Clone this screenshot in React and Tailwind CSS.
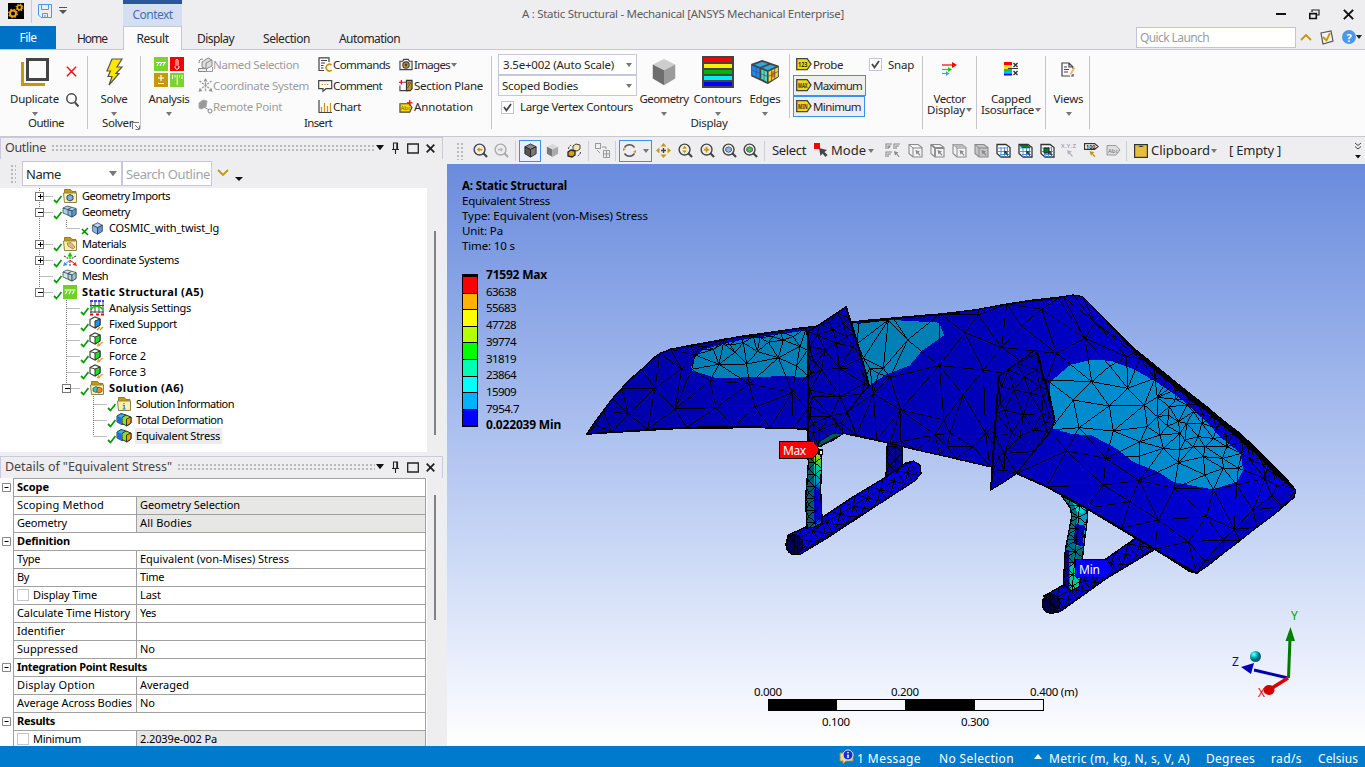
import React, { useLayoutEffect, useRef } from 'react';

/* Text label that spreads its letters so that it fills the width w. */
function T({ w, className = '', children }) {
  const ref = useRef(null);
  useLayoutEffect(() => {
    const el = ref.current;
    if (!w || !el) return;
    el.style.letterSpacing = '0px';
    const natural = el.getBoundingClientRect().width;
    el.style.letterSpacing = (w - natural) / el.textContent.length + 'px';
  }, [w, children]);
  return <span ref={ref} className={'inline-block whitespace-pre align-top ' + className}>{children}</span>;
}

const Svg = ({ w = 16, h = 16, vb, className = '', children }) => (
  <svg width={w} height={h} viewBox={vb || `0 0 ${w} ${h}`} className={'block shrink-0 ' + className} fill="none">{children}</svg>
);
const Caret = ({ className = '', c = '#777', s = 6 }) => (
  <Svg w={s} h={(s * 2) / 3} vb="0 0 6 4" className={className}><path d="M0 0h6L3 4z" fill={c} /></Svg>
);
const Dots = ({ className }) => <div className={'bg-[radial-gradient(circle,#9a9aa2_0.6px,transparent_0.9px)] bg-[length:4px_4px] ' + className} />;

/* ---------- icons ---------- */
const Cube = ({ s = 16, top = '#d8d8d8', l = '#777', r = '#aaa', st = '#444', className = '' }) => (
  <Svg w={s} h={s} vb="0 0 16 16" className={className}>
    <path d="M8 1l6 3-6 3-6-3z" fill={top} stroke={st} strokeWidth=".9" />
    <path d="M2 4l6 3v8l-6-3.5z" fill={l} stroke={st} strokeWidth=".9" />
    <path d="M14 4L8 7v8l6-3.5z" fill={r} stroke={st} strokeWidth=".9" />
  </Svg>
);
const Mag = ({ c = '#444', children }) => (
  <Svg w={15} h={15} vb="0 0 16 16"><circle cx="7" cy="7" r="5.800" stroke={c} strokeWidth="1.500" /><path d="M11 11l4 4" stroke={c} strokeWidth="2.200" />{children}</Svg>
);
const Gears = () => (
  <Svg w={16} h={16}>
    <rect width="16" height="16" fill="#000" />
    <circle cx="5" cy="10.5" r="3" stroke="#e8a317" strokeWidth="2" /><circle cx="5" cy="10.5" r="4.3" stroke="#e8a317" strokeWidth="1.2" strokeDasharray="1.5 1.9" />
    <circle cx="11.5" cy="4.5" r="2.2" stroke="#e8a317" strokeWidth="1.6" /><circle cx="11.5" cy="4.5" r="3.4" stroke="#e8a317" strokeWidth="1.1" strokeDasharray="1.3 1.4" />
  </Svg>
);
const Save = () => (
  <Svg w={14} h={14}><path d="M.5.5h13v13H3L.5 11z" stroke="#4a98ea" /><path d="M3.500.5v5h7v-5M4.500 13.500V9.500h5v4M7 11v2" stroke="#4a98ea" /></Svg>
);
const Duplicate = () => (
  <Svg w={28} h={28}><path d="M1.500 4v22.500H24" stroke="#c7960c" strokeWidth="3" /><rect x="6.500" y="1.500" width="20" height="20" stroke="#444" strokeWidth="3" fill="#fbfbfb" /></Svg>
);
const Bolt = () => (
  <Svg w={20} h={28}><path d="M8 1h10L13 9h5l-6 6.500h3L5 27l3-8.500H4l2.500-5.500H3z" fill="#fde600" stroke="#555" strokeWidth="1.2" /></Svg>
);
const AnalysisIcon = () => (
  <Svg w={30} h={30}>
    <rect width="14" height="14" fill="#79d42e" /><rect x="16" width="14" height="14" fill="#f00000" />
    <rect y="16" width="14" height="14" fill="#c79a0c" /><rect x="16" y="16" width="14" height="14" fill="#79d42e" />
    <path d="M2 5.500h10M4.500 6L3 9M7.500 6L6 9M10.500 6L9 9" stroke="#fff" /><path d="M22 3.500a1 1 0 012 0v5a2 2 0 11-2 0z" stroke="#fff" fill="none" />
    <path d="M7 18v6M4 21h6M4 26.500h6" stroke="#fff" strokeWidth="1.200" /><path d="M18.500 18v4M21 18v2.500M23.200 18v10M25.500 18v2.500M28 18v4" stroke="#fff" />
  </Svg>
);
const NamedSel = () => (
  <Svg w={15} h={15}><path d="M4 5l6-4 4 2v6l-6 3-4-2z" fill="#ddd" stroke="#888" /><path d="M8 6v6M8 6l6-3" stroke="#888" /><path d="M.5 11.500h8v3h-8zM1 6c0-3 1-4 4-4" fill="#eee" stroke="#888" /><path d="M7 14.500h7.500V10" stroke="#999" /></Svg>
);
const CoordGrey = () => (
  <Svg w={15} h={15}><path d="M7.500 1v13M1.500 3l12 9M13.500 3l-12 9" stroke="#999" strokeDasharray="2.200 1" strokeWidth="1.300" /><path d="M5.500 3.500L7.500 0l2 3.500zM.5 14l1-4 3 3zM14.500 14l-1-4-3 3z" fill="#999" /></Svg>
);
const Remote = () => (
  <Svg w={15} h={15}><path d="M1 4l4-3 4 1-1 6-5 2-2-1z" fill="#999" stroke="#aaa" /><path d="M6 8l5 3" stroke="#999" /><circle cx="12" cy="12" r="2" stroke="#888" /></Svg>
);
const Commands = () => (
  <Svg w={15} h={15}><path d="M6 13.500H1V.8h10V5M3 3.500h6M3 6h4M3 8.500h2.500M3 11h2.500" stroke="#444" strokeWidth="1.200" /><path d="M13.500 8a3.300 3.300 0 10.3 5" stroke="#c7960c" strokeWidth="1.700" /></Svg>
);
const Comment = () => (
  <Svg w={15} h={15}><path d="M.7 2.700h13v8H8l-3 2.500v-2.500H.7z" stroke="#444" strokeWidth="1.200" fill="#fff" /><path d="M3.500 6.500h8" stroke="#c7960c" strokeWidth="1.200" strokeDasharray="1.500 1.200" /></Svg>
);
const Chart = () => (
  <Svg w={15} h={15}><path d="M1 1v12.500h13" stroke="#444" strokeWidth="1.200" /><path d="M3.500 8v5M6.500 4v9M9.500 7v6M12.500 4v9" stroke="#c7960c" strokeWidth="1.200" /></Svg>
);
const Camera = () => (
  <Svg w={14} h={14} vb="0 0 15 15"><path d="M1 3.500h3l1-2h5l1 2h3v9H1z" fill="#eee" stroke="#444" strokeWidth="1.200" /><circle cx="7.500" cy="7.500" r="3.400" fill="#c79a20" stroke="#444" strokeWidth="1.200" /><circle cx="7.500" cy="7.500" r="1.500" fill="#444" /></Svg>
);
const Section = () => (
  <Svg w={14} h={14} vb="0 0 15 15"><path d="M5 3.500h4v9H1V7" stroke="#444" strokeWidth="1.200" /><path d="M8 1.500h6v9l-2 2H8z" fill="#c7960c" stroke="#333" strokeWidth="1.200" /><path d="M9 10l4-7M9.500 6L11 3" stroke="#555" /><path d="M0 3.500h5M2.500 1v5" stroke="#e00" strokeWidth="1.300" /></Svg>
);
const Annot = () => (
  <Svg w={14} h={14} vb="0 0 15 15"><path d="M1 4h10l3 4-2.500 5H1z" fill="#f5d90c" stroke="#444" strokeWidth="1.200" /><text x="1.500" y="11" fontSize="6.500" fill="#7a6400" className="font-['Noto_Sans',sans-serif]">Abc</text><path d="M8.500 3h6M11.500 0v6" stroke="#e00" strokeWidth="1.300" /></Svg>
);
const Tag = ({ t }) => (
  <Svg w={16} h={13}><path d="M.7.700h10.500l3.800 5.300-3.800 5.600H.7z" fill="#f5d90c" stroke="#444" strokeWidth="1.300" /><text x="2" y="8.800" fontSize="7" fontWeight="700" textLength="9.500" lengthAdjust="spacingAndGlyphs" fill="#333" className="font-['Noto_Sans',sans-serif]">{t}</text></Svg>
);
const Contours = () => (
  <Svg w={32} h={32}><rect width="32" height="32" fill="#444" /><path d="M2 4h28" stroke="#f00" strokeWidth="4" /><path d="M2 10h28" stroke="#f5f000" strokeWidth="4" /><path d="M2 16h28" stroke="#00b400" strokeWidth="4" /><path d="M2 22h28" stroke="#00f0f0" strokeWidth="4" /><path d="M2 28h28" stroke="#00f" strokeWidth="4" /></Svg>
);
const Edges = () => (
  <Svg w={28} h={24} vb="0 0 30 26"><path d="M1 5L12 1l17 6v11l-11 7L1 17z" fill="#2ea8e0" stroke="#444" strokeWidth="2" /><path d="M1 5l9 3.500V20l-9-4z" fill="#1e86f0" /><path d="M11 9l7 3v12l-7-4z" fill="#4fe0c0" /><path d="M18 12l11-5v11l-11 6z" fill="#e8e020" /><path d="M22 13l4-2v7l-4 2z" fill="#f26c1c" /><path d="M1 5l17 7 11-5M18 12v12M10 8.500V20M10 8.500L21 4" stroke="#444" strokeWidth="1.800" /><path d="M5.500 7v11M14 11v11M22 10v12M25.500 9v11M18 18l11-5.500M1 11l17 7" stroke="#456" strokeWidth=".8" /></Svg>
);
const VectorI = () => (
  <Svg w={15} h={14}><path d="M0 3h11" stroke="#f00" strokeWidth="1.200" /><path d="M10 0l5 3-5 3z" fill="#f00" /><path d="M0 7.500h7" stroke="#0d0" strokeWidth="1.200" /><path d="M6 5l4 2.500L6 10z" fill="#0d0" /><path d="M0 11.500h5" stroke="#4a98ea" strokeWidth="1.200" /><path d="M4 9l3.500 2.500L4 14z" fill="#4a98ea" /></Svg>
);
const Capped = () => (
  <Svg w={15} h={14}><path d="M0 1.500h8" stroke="#f00" strokeWidth="3" /><path d="M0 5h8" stroke="#fd0" strokeWidth="4" /><path d="M0 8.500h8" stroke="#0c4" strokeWidth="3" /><path d="M0 10.500h8" stroke="#0bf" strokeWidth="2" /><path d="M0 12.500h8" stroke="#00f" strokeWidth="2" /><path d="M4 6.500h10" stroke="#333" /><path d="M9.500 1l4 4M13.500 1l-4 4M9.500 9l4 4M13.500 9l-4 4" stroke="#333" strokeWidth="1.400" /></Svg>
);
const Views = () => (
  <Svg w={15} h={15}><path d="M9 14H1V1h7l4 4v2M12 12v2h-2M8 1v4h4M3 5h3M3 7.500h5M3 10h4" stroke="#444" strokeWidth="1.200" /><path d="M13.500 5.500l-4 7" stroke="#e2c27a" strokeWidth="2" /></Svg>
);

/* toolbar icons */
const Pan = () => (
  <Svg w={15} h={15}><path d="M7.500 0l3 3.500h-6zM7.500 15l3-3.500h-6zM0 7.500l3.500-3v6zM15 7.500l-3.500-3v6z" fill="#c7960c" /><path d="M7.500 5v5M5 7.500h5" stroke="#444" strokeWidth="1.400" /></Svg>
);
const Rotate = () => (
  <Svg w={15} h={15}><path d="M2.500 4.500a6 6 0 0110 0M12.500 10.500a6 6 0 01-10 0" stroke="#555" strokeWidth="1.400" /><path d="M1 8V5l3 1zM14 7v3l-3-1z" fill="#c7960c" /></Svg>
);
const ViewCubes = () => (
  <Svg w={15} h={15}><path d="M6 3l3-2 4 1v4l-3 2-4-1z" fill="#f5e6b0" stroke="#444" /><path d="M1 9l3-2 4 1v4l-3 2-4-1z" fill="#d3a21c" stroke="#222" strokeWidth="1.300" /><path d="M1.500 6c0-2 1-3 3-4M13.500 9c0 2-1 3-3 4" stroke="#444" strokeDasharray="2 1" /></Svg>
);
const Boxes = () => (
  <Svg w={15} h={15}><rect x=".5" y=".5" width="5" height="5" stroke="#999" /><path d="M7 4h4v2M8.500 7.500h6v7h-6zM8.500 11h6M11.500 7.500v7M2 7l3 3" stroke="#999" /></Svg>
);
const Pointer = () => (
  <Svg w={15} h={15}><rect width="6" height="6" fill="#f00" /><path d="M5 5l8 2-2.500 2 3 3-2 2-3-3.500L6.500 13z" fill="#444" /></Svg>
);
const Pick = ({ v }) => (
  <Svg w={15} h={15}>
    <path d="M1 1.500h9l4 3v9.500H5L1 10.500z" fill={v === 3 ? '#c4c4c8' : '#f3f3f6'} stroke="#8a8a8e" strokeWidth="1.100" />
    <path d="M1 1.500l4 3.500h9M5 5v9" stroke="#8a8a8e" strokeWidth={v === 1 ? 1.8 : 1} />
    {v === 2 && <path d="M1 1.500h9l4 3H5z" fill="#bbb" />}
    <path d="M7.500 7l4.500 1.500-1.500 1 2 2.500-1 .8-1.800-2.500-1.200 1.500z" fill="#888" />
  </Svg>
);
const MeshPick = ({ v }) => (
  <Svg w={15} h={15}>
    <path d="M1 1.500h9l4 3v9.500H5L1 10.500z" fill="#fff" stroke="#333" strokeWidth="1.300" />
    <path d="M1 5h10M2 8.500h12M4 11.500h10M5 4v10M8.500 4v10M11.500 4v10" stroke="#4a98ea" />
    {v === 1 && <path d="M2 2.500h8l2 2H4z" fill="#0a8a1a" stroke="#063" />}
    {v === 2 && <path d="M4 5h5v5H4z" fill="#0a7a2a" stroke="#222" />}
    <path d="M8 7.500l4 1.300-1.500 1 1.800 2.200-.8.800-1.800-2.300-1 1.300z" fill="#333" />
  </Svg>
);
const Grid4 = () => (
  <Svg w={16} h={15}><path d="M1 6V1h6M3 6V3h2l-1 2M9 6V1h6M11 6V3h3M1 14V9h6M3 14v-3h3" stroke="#888" strokeWidth="1.100" /><path d="M9 8l4.500 1.500-1.500 1 2.500 3-1 .8-2-3L10 12.500z" fill="#888" /></Svg>
);
const XYZ = () => (
  <Svg w={16} h={15}><text x="0" y="5" fontSize="6" fill="#8d8d90" textLength="15" className="font-['Noto_Sans',sans-serif]">X.Y.Z</text><path d="M6 7l5 1.500-2 1.200 3 3.300-1 1-3-3.500L7 12z" fill="#b5b5b8" /></Svg>
);
const Tag100 = () => (
  <Svg w={15} h={15}><path d="M.6.600h10l3.500 2.900-3.500 2.900H.6z" fill="#fff" stroke="#333" strokeWidth="1.200" /><text x="2" y="5.500" fontSize="5.500" fontWeight="700" fill="#222" className="font-['Noto_Sans',sans-serif]">100</text><path d="M5.500 8l5 1.200-1.700 1 2.700 3-1 1-2.500-3L7 13z" fill="#c7960c" /></Svg>
);
const AbcTag = () => (
  <Svg w={15} h={15}><path d="M1 2.500h9l4 4.500-4 5H1z" fill="#ddd" stroke="#999" /><text x="2" y="9.500" fontSize="6" fill="#777" className="font-['Noto_Sans',sans-serif]">Abc</text></Svg>
);
const Pin = () => <Svg w={9} h={12}><path d="M1 7.500h7M2.500 7.500V1h4v6.500M5.800 1v6M4.500 8v4" stroke="#222" strokeWidth="1.100" /></Svg>;
const Square = () => <Svg w={12} h={11}><path d="M.7 1h10.600v9H.7z" stroke="#222" strokeWidth="1.300" /></Svg>;
const Cross = ({ s = 9, c = '#222', k = 1.8 }) => <Svg w={s} h={s} vb="0 0 9 9"><path d="M.7.700l7.600 7.600M8.300.7L.7 8.300" stroke={c} strokeWidth={k} /></Svg>;

/* tree icons */
const Folder = ({ children }) => (
  <Svg><path d="M2.500 1.500h6l1.500 2h4v2h-11.500z" fill="#c7960c" stroke="#8a6a10" strokeWidth=".8" /><path d="M1.500 5h13v9.500h-12z" fill="#fdf3a8" stroke="#8d8450" />{children}</Svg>
);
const TwoCubes = ({ a, b, c }) => (
  <Svg><path d="M1 4l4-2 9 2.500v6l-4 2.500-9-4z" fill={a} stroke="#465" strokeWidth=".9" /><path d="M6 5.500l4 1.500v6l-4-2z" fill={b} stroke="#354" strokeWidth=".8" /><path d="M10 7l4-2.500v6L10 13z" fill={c} stroke="#354" strokeWidth=".8" /><path d="M1 4l9 3M5.500 5.500l4-2" stroke="#345" strokeWidth=".8" /></Svg>
);
const TI = {
  geoimp: () => <Folder><path d="M5 8l3-1.500L11 8v3.500L8 13l-3-1.500z" fill="#7bb0e8" stroke="#345" /></Folder>,
  geo: () => <TwoCubes a="#a9cdf5" b="#86b7f0" c="#5c97dc" />,
  body: () => <Cube s={13} top="#b9d7fa" l="#86b7f0" r="#5c97dc" st="#333" />,
  mat: () => <Folder><path d="M5 7l4-.5 4 4.500-2 2-5-3z" fill="#e3b68a" stroke="#9a7040" strokeWidth=".7" /></Folder>,
  cs: () => <Svg><path d="M8 2v5" stroke="#0c0" strokeWidth="1.300" /><path d="M5.500 4.500L8 0l2.500 4.500z" fill="#0c0" /><path d="M8 8l-5 4" stroke="#48f" /><path d="M1 14l1.500-4 3 3z" fill="#48f" /><path d="M8 8l5 4" stroke="#e00" /><path d="M15 14l-1.500-4-3 3z" fill="#e22" /><path d="M2 4l5 3M14 4L9 7M8 9v5" stroke="#555" strokeWidth="1.200" strokeDasharray="2 1" /></Svg>,
  mesh: () => <TwoCubes a="#d8e4f0" b="#b7cbe2" c="#a9bdd6" />,
  ss: () => <Svg><rect x="1" y="1" width="14" height="14" fill="#6fd028" /><path d="M2.500 6h11M5 7l-1.500 3M8.500 7L7 10M12 7l-1.500 3" stroke="#fff" strokeWidth="1.100" /></Svg>,
  set: () => <Svg><path d="M1 1h14" stroke="#00f" strokeDasharray="3 1" strokeWidth="1.500" /><path d="M2 2v11M6 2v11M10 2v11M14 2v11M1 5.500h14M1 12h14" stroke="#444" /><path d="M2 10c2-5 9-5 12 0" stroke="#0c0" strokeWidth="1.500" /><path d="M1 14.500h3M7 14.500h3M12 14.500h3" stroke="#f00" strokeWidth="1.800" /></Svg>,
  fix: () => <Svg><path d="M1 3.500L6 1l5 2v6l-5 3-5-2.500z" fill="#fff" stroke="#444" strokeWidth="1.200" /><path d="M6 5l5-2v6l-5 3z" fill="#1e90f0" stroke="#333" /><path d="M8 14l3-3M11 14l3-3" stroke="#c7960c" strokeWidth="1.300" /></Svg>,
  force: () => <Svg><path d="M1 3.500L6 1l5 2v6l-5 3-5-2.500z" fill="#fff" stroke="#444" strokeWidth="1.200" /><path d="M6 5l5-2v6l-5 3z" fill="#1fdc2f" stroke="#333" /><path d="M1 3.500L6 5" stroke="#444" /><path d="M14 10l-4 3" stroke="#d8a33c" strokeWidth="1.400" /><path d="M7.500 14.500l2-4 2 3.500z" fill="#d8a33c" /></Svg>,
  sol: () => <Folder><path d="M4 8l3-1.500 2 1v4l-2 1-3-1.500z" fill="#2cc" stroke="#345" strokeWidth=".7" /><path d="M8 8.500l2-1.500 3 1.500v3L10 13l-2-1z" fill="#f80" stroke="#345" strokeWidth=".7" /></Folder>,
  info: () => <Folder><path d="M8 7v1.200M6.800 9.500h1.400V13M6.500 13h3.200" stroke="#1e80e0" strokeWidth="1.200" /></Folder>,
  res: () => <Svg><path d="M1 4l4-2.500L10 3v8l-4 1.500L1 10z" fill="#19c3f0" stroke="#333" /><path d="M1 4l4 1.500v7L1 10z" fill="#1b6fe8" /><path d="M6 5.500L10 3l5 2v6l-4 3-5-2.500z" fill="#8ee01c" stroke="#333" /><path d="M10.500 7L15 5v6l-4.500 3z" fill="#fb9a08" stroke="#333" /></Svg>,
};

/* ---------- outline tree ---------- */
const tree = [
  [0, '+', 'geoimp', 'Geometry Imports', 88],
  [0, '-', 'geo', 'Geometry', 48],
  [1, 'e', 'body', 'COSMIC_with_twist_lg', 110, 'x'],
  [0, '+', 'mat', 'Materials', 44],
  [0, '+', 'cs', 'Coordinate Systems', 97],
  [0, '', 'mesh', 'Mesh', 26],
  [0, '-', 'ss', 'Static Structural (A5)', 122],
  [1, '', 'set', 'Analysis Settings', 82],
  [1, '', 'fix', 'Fixed Support', 68],
  [1, '', 'force', 'Force', 28],
  [1, '', 'force', 'Force 2', 37],
  [1, '', 'force', 'Force 3', 37],
  [1, '-', 'sol', 'Solution (A6)', 75],
  [2, '', 'info', 'Solution Information', 98],
  [2, '', 'res', 'Total Deformation', 87],
  [2, '', 'res', 'Equivalent Stress', 84],
];
function TreeRow({ row, i }) {
  const [lv, ex, ic, label, w, mark] = row;
  const Icon = TI[ic];
  const cx = 13.5 + 27 * lv;
  const W = 36 + 27 * lv;
  const bold = label.includes('(');
  const last = ex === 'e' || label === 'Solution (A6)' || label === 'Static Structural (A5)' || i === tree.length - 1;
  const dot = { stroke: '#777', strokeDasharray: '1 1' };
  return (
    <div className="flex h-4 items-center pl-[26px]">
      <Svg w={W} h={16}>
        <path d={`M${cx} 0V${last ? 8 : 16}M${cx} 8.5h14`} {...dot} />
        {lv === 1 && ex === 'e' && <path d="M13.500 0v16" {...dot} />}
        {(ex === '+' || ex === '-') && (
          <g shapeRendering="crispEdges">
            <rect x={cx - 4} y="4.500" width="8" height="8" fill="#fff" stroke="#777" />
            <path d={`M${cx - 2} 8.500h5` + (ex === '+' ? `M${cx + 0.5} 6v5` : '')} stroke="#000" />
          </g>
        )}
        {mark ? <path d={`M${W - 7} 9l6 6M${W - 1} 8l-6 6`} stroke="#080" strokeWidth="1.500" /> :
          <path d={`M${W - 8} 12l2.500 2.500L${W - 0.5} 8`} stroke="#089a08" strokeWidth="1.800" />}
      </Svg>
      <span className="flex w-4 shrink-0 items-center justify-center"><Icon /></span>
      <span className={'ml-[3px] h-4 pl-px pr-0.5 ' + (i === 15 ? 'bg-[#ececee]' : '')}>
        <T w={w} className={'text-[11px] leading-4 text-black ' + (bold ? 'font-bold' : '')}>{label}</T>
      </span>
    </div>
  );
}

/* ---------- details ---------- */
const details = [
  ['h', 'Scope', 32],
  ['g', 'Scoping Method', 87, 'Geometry Selection', 100],
  ['g', 'Geometry', 50, 'All Bodies', 52],
  ['h', 'Definition', 53],
  ['', 'Type', 23, 'Equivalent (von-Mises) Stress', 149],
  ['', 'By', 12, 'Time', 24],
  ['c', 'Display Time', 64, 'Last', 21],
  ['', 'Calculate Time History', 113, 'Yes', 16],
  ['', 'Identifier', 48, '', 0],
  ['', 'Suppressed', 61, 'No', 15],
  ['h', 'Integration Point Results', 130],
  ['', 'Display Option', 78, 'Averaged', 49],
  ['', 'Average Across Bodies', 115, 'No', 15],
  ['h', 'Results', 38],
  ['cg', 'Minimum', 48, '2.2039e-002 Pa', 77],
];
function DetailRow({ d }) {
  const [k, name, nw, val, vw] = d;
  const t = 'text-[11px] leading-[15px] text-black';
  if (k === 'h')
    return (
      <div className="flex h-[18px]">
        <div className="flex w-[13px] items-center pl-[2px]"><Svg w={9} h={9}><path d="M.5.500h8v8h-8z" stroke="#888" /><path d="M2.500 4.500h4" stroke="#000" /></Svg></div>
        <div className="w-[413px] border border-b-0 border-[#a0a0a0] pl-[3px]"><T w={nw} className={t + ' font-bold'}>{name}</T></div>
      </div>
    );
  return (
    <div className="flex h-[18px] pl-[13px]">
      <div className="flex w-[123px] items-start border-l border-t border-[#a0a0a0] pl-[3px]">
        {k.includes('c') && <span className="mr-1 mt-[2px] h-3 w-3 border border-[#c4c4cc] bg-white" />}
        <T w={nw} className={t}>{name}</T>
      </div>
      <div className={'w-[290px] border-x border-t border-[#a0a0a0] pl-[3px] ' + (k.includes('g') ? 'bg-[#e7e7e5]' : '')}>
        {val && <T w={vw} className={t}>{val}</T>}
      </div>
    </div>
  );
}

/* ---------- mesh ---------- */
/* Bowyer-Watson triangulation; returns the edges as one path. */
function meshPath(pts) {
  const P = pts.map(([x, y], i) => [x + Math.sin(i * 7.3) * 0.01, y + Math.cos(i * 3.1) * 0.01]);
  const n = P.length;
  P.push([-9000, -9000], [12000, -9000], [1000, 15000]);
  const circ = (a, b, c) => {
    const [ax, ay] = P[a], [bx, by] = P[b], [cx, cy] = P[c];
    const d = 2 * (ax * (by - cy) + bx * (cy - ay) + cx * (ay - by));
    const A = ax * ax + ay * ay, B = bx * bx + by * by, C = cx * cx + cy * cy;
    const x = (A * (by - cy) + B * (cy - ay) + C * (ay - by)) / d;
    const y = (A * (cx - bx) + B * (ax - cx) + C * (bx - ax)) / d;
    return { t: [a, b, c], x, y, r: (ax - x) ** 2 + (ay - y) ** 2 };
  };
  let tris = [circ(n, n + 1, n + 2)];
  for (let i = 0; i < n; i++) {
    const edges = new Map();
    tris = tris.filter((q) => {
      if ((P[i][0] - q.x) ** 2 + (P[i][1] - q.y) ** 2 >= q.r) return true;
      for (let k = 0; k < 3; k++) {
        const a = q.t[k], b = q.t[(k + 1) % 3];
        const key = Math.min(a, b) + '_' + Math.max(a, b);
        edges.has(key) ? edges.set(key, null) : edges.set(key, [a, b]);
      }
      return false;
    });
    edges.forEach((e) => e && tris.push(circ(e[0], e[1], i)));
  }
  const seen = new Set();
  let out = '';
  tris.forEach(({ t }) => {
    for (let k = 0; k < 3; k++) {
      const a = Math.min(t[k], t[(k + 1) % 3]), b = Math.max(t[k], t[(k + 1) % 3]);
      if (b >= n || seen.has(a + '_' + b)) continue;
      seen.add(a + '_' + b);
      out += `M${pts[a][0]} ${pts[a][1]}L${pts[b][0]} ${pts[b][1]}`;
    }
  });
  return out;
}
const parse = (s, dx = 0) => s.trim().split(/\s+/).map((p) => { const [x, y] = p.split(',').map(Number); return [x + dx, y]; });
const poly = (pts) => 'M' + pts.map((p) => p.join(' ')).join('L') + 'Z';
const O = 1080;

const wing = [
  ...parse('20,432 45,395 70,362 98,325 125,295 150,268 185,238 215,208 240,190 272,178 330,166 380,158 430,148 480,140 540,132 600,124 640,118 680,112 815,96 870,90 940,84 1040,75'),
  ...parse('0,72 60,65 115,58 200,42 280,30 370,20 400,15 428,20 465,57 520,112 590,182 640,222 720,287 760,319 800,350 850,392 900,430 940,468 990,518 1040,568 1067,600 1062,622 1030,650 1000,675 950,712 900,752 850,790 810,822 770,850 750,845 700,813 645,778 600,750 545,715 490,683 440,655 380,622 320,590 270,568 230,550 150,530 80,514 0,495', O),
  ...parse('1010,480 930,460 790,430 720,470 683,420 640,414 570,412 520,411 460,410 320,412 280,414 203,418 95,427'),
];
/* mesh nodes that lie on the outline of the wing */
const wingRim = [
  ...parse('20,432 45,395 70,362 98,325 125,295 185,238 240,190 272,178 330,166 430,148 480,140 540,132 600,124 680,112 815,96 940,84 95,427 203,418 320,412 460,410 570,412 640,414 720,470 790,430 930,460 1010,480'),
  ...parse('0,72 115,58 200,42 370,20 400,15 428,20 590,185 640,225 720,290 800,352 850,395 900,432 940,470 990,518 1040,568 1067,600 1030,650 950,712 900,752 850,790 770,850 645,778 545,715 440,655 320,590 230,550 150,530 0,495', O),
];
const wingPts = [
  ...wingRim,
  ...parse('145,372 225,295 285,357 305,237 390,272 408,353 345,195 335,238 400,178 417,223 465,187 500,222 508,282 525,352 595,203 532,185 490,158 565,157 637,308 650,228 660,170 610,150 540,142 450,165 355,180 640,140 48,405 683,180 683,255 683,355 925,90 835,100 833,160 850,205 983,150 870,235 910,235 895,250 930,262 880,312 1078,227 962,360 1065,435 960,455 890,450 800,368 830,435 430,160 380,170 580,140 520,140'),
  ...parse('115,75 75,128 245,108 185,172 130,240 305,58 355,25 465,98 435,145 350,190 510,228 560,200 70,315 12,390 30,430 137,430 48,505 22,470 100,470 580,190 645,265 455,275 563,295 400,330 508,348 613,345 652,322 705,300 708,328 652,380 688,350 742,345 760,365 715,395 685,375 622,410 660,435 683,408 720,430 740,400 785,400 790,375 830,415 600,455 520,423 417,413 670,475 720,480 735,450 775,440 760,470 795,470 790,500 715,518 600,498 498,505 380,483 490,585 598,572 570,635 655,690 703,595 795,555 850,535 848,505 820,598 800,680 745,755 940,660 883,718 850,750 995,618 890,585 895,535 905,490 860,470 820,445 940,485 930,510 970,525 1000,550 1030,585 975,565 1010,590 795,815 600,205 650,245 680,270 725,305 750,330 800,362 840,395 880,430 910,455 960,505 1005,540 320,270 330,420 980,540 925,475 860,440 700,285 775,345 820,380', O),
];
const fin1 = parse('683,125 720,103 745,86 772,68 798,50 808,85 822,130 845,205 868,290 845,312 802,368 830,435 790,430 760,450 715,470 690,455 683,420 683,355 683,270 683,200');
const fin1Pts = [...fin1, ...parse('712,135 708,222 698,320 778,235 753,378 780,320 735,180 770,160 800,140 748,100 820,170 720,420 700,400 770,400 690,170 692,250 690,300 692,350 690,380 700,430 845,240 855,280 760,120 790,100 784,400 695,200 725,240')];
const fin2 = parse('175,260 230,220 285,180 295,190 310,260 325,300 345,392 328,430 282,485 230,550 190,577 152,600 157,545 160,490 168,370', O);
const fin2Pts = [...fin2, ...parse('195,360 193,490 250,375 253,260 215,430 305,370 320,425 290,240 270,310 185,290 240,440 165,440 178,500 180,340 315,400 300,290 310,320 222,300 205,240 192,540 330,380 280,420', O)];

function tube(x1, y1, r1, x2, y2, r2, n) {
  const dx = x2 - x1, dy = y2 - y1, l = Math.hypot(dx, dy), a = -dy / l, b = dx / l;
  const pts = [];
  for (let i = 0; i <= n; i++) {
    const t = i / n, r = r1 + (r2 - r1) * t;
    [-1, -0.15, 0.65, 1].forEach((k, j) => {
      const s = Math.min(1, Math.max(0, t + (j % 2) / (2 * n)));
      pts.push([+(x1 + dx * s + a * r * k).toFixed(1), +(y1 + dy * s + b * r * k).toFixed(1)]);
    });
  }
  return pts;
}
const skid1 = parse('625,735 680,710 730,680 820,620 920,560 975,520 1000,513 1020,525 1023,550 1005,572 900,640 740,745 660,793 630,785 618,760');
const skid2 = parse('312,918 370,885 500,805 590,742 645,778 500,865 360,965 335,970', O);
const strut1 = parse('683,470 720,478 725,510 722,600 727,700 700,712 680,712 677,620 685,520');
const strut2 = parse('365,618 440,655 443,680 430,780 418,890 395,902 370,882 376,780 395,680 392,655', O);
const strutR = parse('922,455 968,468 968,562 918,562');
/* leading edge of the right half, where the elements are too small to tell apart */
const edgeBand = parse('425,18 590,181 720,286 800,348 940,466 1040,564 1067,600 1052,594 1030,574 935,482 800,366 712,300 590,194', O);

function Part({ id, shape, pts, fill, sw = 3, children }) {
  const d = poly(shape);
  return (
    <g>
      <clipPath id={id}><path d={d} /></clipPath>
      <path d={d} fill={fill} />
      <g clipPath={`url(#${id})`}>{children}<path d={meshPath(pts)} stroke="#000" strokeWidth={sw} /></g>
      <path d={d} stroke="#000" strokeWidth="4" />
    </g>
  );
}
function Model() {
  return (
    <svg width="918" height="582" viewBox="447 164 918 582" className="block" fill="none" shapeRendering="crispEdges">
      <defs>
        <linearGradient id="blue" x1="0" x2="1"><stop offset="0" stopColor="#0000a6" /><stop offset=".2" stopColor="#0000b6" /><stop offset=".55" stopColor="#0000b8" /><stop offset=".8" stopColor="#0000c8" /><stop offset="1" stopColor="#0000de" /></linearGradient>
        <linearGradient id="hot" x1="0" y1="0" x2="0" y2="1"><stop offset="0" stopColor="#d8e800" /><stop offset=".12" stopColor="#7fd000" /><stop offset=".25" stopColor="#00c89a" /><stop offset=".45" stopColor="#0088c0" /><stop offset=".55" stopColor="#0000c8" /><stop offset=".9" stopColor="#0000c8" /><stop offset="1" stopColor="#007ac0" /></linearGradient>
        <radialGradient id="ball" cx=".35" cy=".3"><stop offset="0" stopColor="#8ff" /><stop offset=".5" stopColor="#0cc" /><stop offset="1" stopColor="#067" /></radialGradient>
      </defs>
      <g transform="translate(580 290) scale(.33333)">
        <Part id="sr" shape={strutR} pts={tube(945, 450, 24, 942, 565, 24, 3)} fill="#000092" />
        <Part id="k2" shape={skid2} pts={tube(333 + O, 940, 31, 620 + O, 758, 26, 7)} fill="#0000d0" />
        <ellipse cx={333 + O} cy="941" rx="26" ry="29" fill="#00004c" stroke="#000" strokeWidth="4" />
        <path d={`M${333 + O} 913v56M${312 + O} 925l42 32M${322 + O} 915l24 52`} stroke="#000" strokeWidth="2.500" />
        <Part id="s2" shape={strut2} pts={tube(415 + O, 630, 32, 392 + O, 905, 26, 8)} fill="#00707c">
          <path d={`M${410 + O} 640l35 20-14 90-22 20z`} fill="#00a0c0" /><path d={`M${405 + O} 700l30 10-8 60-25-10z`} fill="#0000b8" /><path d={`M${392 + O} 820l30 5-5 70-28 5z`} fill="#00c890" /><path d={`M${372 + O} 780l16 0-2 110-16-5z`} fill="#000090" /><path d={`M${400 + O} 640l35 15-5 15-20-5z`} fill="#00d8c8" />
        </Part>
        <Part id="k1" shape={skid1} pts={tube(640, 762, 32, 1005, 541, 28, 9)} fill="#0000da" />
        <ellipse cx="643" cy="764" rx="25" ry="30" fill="#00005a" stroke="#000" strokeWidth="4" />
        <path d="M643 735v58M622 748l42 32M632 737l24 52" stroke="#000" strokeWidth="2.500" />
        <Part id="s1" shape={strut1} pts={tube(702, 465, 24, 702, 715, 24, 7)} fill="#005a6e"><path d="M703 478h25v230h-25z" fill="url(#hot)" /></Part>
        <Part id="wg" shape={wing} pts={wingPts} fill="url(#blue)">
          <path d="M330 240l14-35 26-26 60-18 70-14 180-26v140l-70-3-100 4-105 2-45-15z" fill="#0080b4" />
          <path d="M820 100l115-10 143 8 14 38-68 48-34 42-72 28-50 32-50-60z" fill="#0080b4" />
          <path d={`M${330 + O} 276l62-52 60-14 60 2 70 26 70 40 70 48 80 72 40 44 60 48 8 50-20 36-72 22-118-22-45-30-75-30-50-40-75-40-60-4-60-18z`} fill="#008ccc" />
          <path d={`M${995 + O} 618l70-25 10 30-300 240-20-30z`} fill="#0000a8" fillOpacity=".55" />
        </Part>
        <path d={poly(edgeBand)} fill="#000" />
        <path d="M20 432l75-5 185-11 240-4 163 5M272 178l108-20 100-18 200-28M815 96l325-28" stroke="#000" strokeWidth="5" />
        <path d={`M${230 + O} 550l90 40 120 65 205 123 125 72`} stroke="#000" strokeWidth="6" />
        <Part id="f1" shape={fin1} pts={fin1Pts} fill="#0000b4" />
        <path d="M715 470l45-25 30-13-30-3-40 25z" fill="#005a50" stroke="#000" strokeWidth="2" />
        <path d="M684 125v330M798 50l24 80 23 75 23 85" stroke="#000" strokeWidth="6" />
        <Part id="f2" shape={fin2} pts={fin2Pts} fill="#0000b0" />
        <path d={`M${290 + O} 182l18 75 18 50 18 85M${177 + O} 258l-9 112-8 120-7 110`} stroke="#000" strokeWidth="6" />
        <path d="M598 455h102l20 25-20 25H598z" fill="#f00" stroke="#000" strokeWidth="3" />
        <rect x="717" y="480" width="11" height="14" fill="#fff" stroke="#000" strokeWidth="4" />
        <path d={`M${407 + O} 808h93l18 27-18 27h-93z`} fill="#0000f8" stroke="#000" strokeWidth="3" />
      </g>
      <g fill="#fff" className="font-['Noto_Sans',sans-serif] text-[12px]">
        <text x="783" y="455" textLength="23">Max</text><text x="1079" y="574" textLength="21">Min</text>
      </g>
      <g stroke="#000">
        <rect x="768.500" y="699.500" width="275" height="11" fill="#f7f8fd" />
        <path d="M768 699h69v12h-69zM905 699h70v12h-70z" fill="#000" stroke="none" />
      </g>
      <g fill="#000" className="font-['Noto_Sans',sans-serif] text-[11.500px]">
        <text x="754" y="696" textLength="28">0.000</text><text x="891" y="696" textLength="28">0.200</text><text x="1030" y="696" textLength="48">0.400 (m)</text>
        <text x="822" y="726" textLength="28">0.100</text><text x="961" y="726" textLength="28">0.300</text>
      </g>
      <g shapeRendering="auto" className="font-['Noto_Sans',sans-serif] text-[12px]">
        <path d="M1288 678l-34-8" stroke="#0000a8" strokeWidth="3" /><path d="M1241 667l13-4-3 11z" fill="#0000b8" />
        <path d="M1288 678l-16 10" stroke="#d80000" strokeWidth="3.500" /><ellipse cx="1269" cy="690" rx="5.500" ry="5" fill="#d00000" />
        <path d="M1288.500 678l1.500-40" stroke="#007800" strokeWidth="3" /><path d="M1290.500 627l4.500 14h-9.500z" fill="#008000" />
        <circle cx="1255.500" cy="656.500" r="5.500" fill="url(#ball)" />
        <text x="1291" y="620" fill="#00a000">Y</text><text x="1232" y="666" fill="#0000d8">Z</text><text x="1258" y="697" fill="#f00000">X</text>
      </g>
    </svg>
  );
}

/* ---------- ribbon ---------- */
const R = 'text-[11.5px] leading-[14px] text-[#262626] ';
const RS = 'text-[11.5px] leading-[11px] text-[#262626]';
const Sep = ({ className = 'h-[73px]' }) => <div className={'w-px shrink-0 self-start bg-[#c6c6ca] ' + className} />;
const Item = ({ icon, w, label, dim, caret }) => (
  <div className="flex h-[21px] items-center">
    <span className="flex w-4 justify-center">{icon}</span>
    <T w={w} className={'text-[11.5px] leading-[16px] ' + (dim ? 'text-[#9b9b9f]' : 'text-[#262626]')}>{label}</T>
    {caret && <Caret className="ml-px" />}
  </div>
);
const Big = ({ icon, label, w, className = '' }) => (
  <div className={'flex flex-col items-center ' + className}>
    <div className="flex h-[36px] items-center">{icon}</div>
    <T w={w} className={R + 'mt-[2px]'}>{label}</T>
    <Caret className="mt-[6px]" />
  </div>
);
const Check = () => <Svg w={13} h={13}><rect x=".5" y=".5" width="12" height="12" fill="#fff" stroke="#c3c3d6" /><path d="M3 6l2.500 3.500L10 3" stroke="#444" strokeWidth="1.800" /></Svg>;
const Combo = ({ w, pad = 'pl-1', children }) => (
  <div className={'flex h-[21px] w-[139px] items-center justify-between border border-[#c6c6dc] bg-white pr-1 ' + pad}><T w={w} className={R}>{children}</T><Caret /></div>
);
const GroupLabel = ({ w, children, className = '' }) => <T w={w} className={R + '-mt-px self-center ' + className}>{children}</T>;

function Ribbon() {
  return (
    <div className="flex h-[87px] shrink-0 border-b border-[#c8c8cc] bg-[#fbfbfb] pt-[6px]">
      <div className="flex w-[87px] flex-col">
        <div className="flex h-[61px]">
          <Big className="ml-2 mt-[-2px] w-[53px]" icon={<Duplicate />} label="Duplicate" w={49} />
          <div className="ml-[5px] flex flex-col gap-[16px] pt-[10px]"><Cross s={11} c="#f01010" k={1.2} /><Svg w={13} h={14}><circle cx="5.500" cy="5.500" r="4.700" stroke="#444" strokeWidth="1.500" /><path d="M9 9.500l3.500 4" stroke="#444" strokeWidth="2" /></Svg></div>
        </div>
        <GroupLabel w={36} className="ml-[5px]">Outline</GroupLabel>
      </div>
      <Sep />
      <div className="flex w-[52px] flex-col">
        <div className="h-[61px]"><Big className="mt-[-2px]" icon={<Bolt />} label="Solve" w={27} /></div>
        <div className="-mt-px flex items-end pl-[14px]"><T w={31} className={R}>Solver</T><Svg w={8} h={8} className="-ml-px"><path d="M.5 7V.5H7M3 3l4 4M7.500 3.500v4h-4" stroke="#777" /></Svg></div>
      </div>
      <Sep />
      <div className="flex w-[350px] flex-col">
        <div className="flex h-[61px]">
          <Big className="mt-[-2px] w-[56px]" icon={<AnalysisIcon />} label="Analysis" w={41} />
          <div className="-mt-[2px] w-[120px]"><Item icon={<NamedSel />} w={86} label="Named Selection" dim /><Item icon={<CoordGrey />} w={96} label="Coordinate System" dim /><Item icon={<Remote />} w={69} label="Remote Point" dim /></div>
          <div className="-mt-[2px] w-[81px]"><Item icon={<Commands />} w={57} label="Commands" /><Item icon={<Comment />} w={49} label="Comment" /><Item icon={<Chart />} w={28} label="Chart" /></div>
          <div className="-mt-[2px]"><Item icon={<Camera />} w={36} label="Images" caret /><Item icon={<Section />} w={69} label="Section Plane" /><Item icon={<Annot />} w={59} label="Annotation" /></div>
        </div>
        <GroupLabel w={28} className="ml-[4px]">Insert</GroupLabel>
      </div>
      <Sep />
      <div className="flex w-[297px] flex-col pl-[6px]">
        <div className="flex h-[61px]">
          <div className="-mt-[2px]">
            <Combo w={111}>3.5e+002 (Auto Scale)</Combo><Combo w={76} pad="pl-[3px]">Scoped Bodies</Combo>
            <div className="flex h-[22px] items-center gap-[6px] pl-[3px]"><Check /><T w={113} className={R}>Large Vertex Contours</T></div>
          </div>
          <Big className="mt-[-2px] w-[54px]" icon={<Cube s={30} top="#cdcdcd" l="#6e6e6e" r="#9b9b9b" st="none" />} label="Geometry" w={49} />
          <Big className="mt-[-2px] w-[53px]" icon={<Contours />} label="Contours" w={48} />
          <Big className="mt-[-2px] w-[42px]" icon={<Edges />} label="Edges" w={31} />
        </div>
        <GroupLabel w={37} className="ml-[131px]">Display</GroupLabel>
      </div>
      <Sep className="-mt-0.5 h-[64px]" />
      <div className="w-[132px] pl-[3px]">
        <div className="-mt-[2px] flex h-[21px] items-center pl-[3px]">
          <Tag t="123" /><T w={30} className={R + 'ml-px'}>Probe</T>
          <span className="ml-[26px] flex items-center gap-[6px]"><Check /><T w={26} className={R}>Snap</T></span>
        </div>
        <div className="flex h-[21px] w-[73px] items-center border border-[#3394f0] bg-[#eeeef1] pl-0.5"><Tag t="MAX" /><T w={49} className={R + 'ml-px'}>Maximum</T></div>
        <div className="flex h-[21px] w-[72px] items-center border border-[#3394f0] bg-[#eeeef1] pl-0.5"><Tag t="MIN" /><T w={48} className={R + 'ml-px'}>Minimum</T></div>
      </div>
      <Sep />
      <div className="flex w-[53px] flex-col items-center pt-[6px]"><div className="h-[31px]"><VectorI /></div><T w={32} className={RS}>Vector</T><div className="flex items-center gap-px"><T w={38} className={RS}>Display</T><Caret /></div></div>
      <Sep />
      <div className="flex w-[68px] flex-col items-center pt-[6px]"><div className="h-[31px]"><Capped /></div><T w={40} className={RS}>Capped</T><div className="flex items-center gap-px"><T w={53} className={RS}>Isosurface</T><Caret /></div></div>
      <Sep />
      <div className="flex w-[43px] flex-col items-center pl-[2px] pt-[6px]"><div className="h-[31px]"><Views /></div><T w={30} className={RS}>Views</T><Caret className="mt-[8px]" /></div>
      <Sep />
    </div>
  );
}

const PanelHead = ({ title, w, dots }) => (
  <div className="flex h-[22px] w-[443px] items-center border-x border-t border-[#c9c9e0] bg-[#eeeef1] pb-px pl-1">
    <T w={w} className="text-[12.5px] leading-[18px] text-[#444]">{title}</T>
    <Dots className={'ml-[5px] h-[9px] ' + dots} />
    <span className="ml-auto flex items-center gap-[7px] pr-[7px]"><Caret s={8} c="#111" /><Pin /><Square /><Cross /></span>
  </div>
);

const TB = ({ w, children }) => <span className={'flex h-[22px] shrink-0 items-center justify-center ' + w}>{children}</span>;
const TSep = () => <span className="h-[20px] w-px shrink-0 bg-[#ccced8]" />;

const legend = [['bg-[#ff0000]', '63638'], ['bg-[#ffb200]', '55683'], ['bg-[#ffff00]', '47728'], ['bg-[#b2ff00]', '39774'], ['bg-[#00ff00]', '31819'], ['bg-[#00ffb2]', '23864'], ['bg-[#00ffff]', '15909'], ['bg-[#00b2ff]', '7954.7'], ['bg-[#0000ff]', '']];

export default function App() {
  const tab = 'text-[12px] leading-4 text-[#262626]';
  return (
    <div className="flex h-[767px] w-[1365px] flex-col overflow-hidden bg-[#eeeef1] font-['Noto_Sans',sans-serif]">
      {/* title bar */}
      <div className="flex h-[26px] shrink-0">
        <div className="flex w-[123px] pl-2 pt-[3px]"><Gears /><span className="-mt-[3px] ml-[7px] h-[23px] w-px bg-[#c9c9dc]" /><span className="ml-[6px] mt-px"><Save /></span><Svg w={8} h={8} className="ml-[7px] mt-1"><path d="M0 .5h8" stroke="#555" /><path d="M0 3h8L4 7z" fill="#555" /></Svg></div>
        <div className="w-[59px] border-t-4 border-[#2b579a] bg-[#d5dff2] pt-[3px] text-center"><T w={40} className="text-[12px] leading-4 text-[#3f6fb8]">Context</T></div>
        <div className="flex-1 pl-[340px] pt-[6px]"><T w={322} className="text-[11.5px] leading-4 text-[#5c5c60]">A : Static Structural - Mechanical [ANSYS Mechanical Enterprise]</T></div>
        <div className="flex w-[89px] items-center gap-[23px] pt-0.5">
          <span className="h-0.5 w-[10px] bg-[#111]" />
          <Svg w={11} h={11}><path d="M3 3V1h7v5H8" stroke="#222" strokeWidth="1.200" /><path d="M.8 4.500h6.500v5H.8zM.5 4.800h7" stroke="#111" strokeWidth="1.600" /></Svg>
          <Cross s={11} c="#111" k={1.6} />
        </div>
      </div>
      {/* tabs */}
      <div className="flex h-[24px] shrink-0 border-b border-[#c8c8cc]">
        <div className="h-[23px] w-[56px] bg-[#0072c6] pt-[4px] text-center"><T w={17} className="text-[12px] leading-4 text-white">File</T></div>
        <div className="w-[67px] pl-[21px] pt-[5px]"><T w={30} className={tab}>Home</T></div>
        <div className="h-[24px] w-[59px] border-x border-t border-[#c8c8cc] bg-[#fbfbfb] pt-[4px] text-center"><T w={32} className={tab}>Result</T></div>
        <div className="w-[81px] pl-[15px] pt-[5px]"><T w={37} className={tab}>Display</T></div>
        <div className="w-[76px] pt-[5px]"><T w={47} className={tab}>Selection</T></div>
        <div className="pt-[5px]"><T w={61} className={tab}>Automation</T></div>
        <div className="ml-auto mr-[3px] flex items-start gap-[4px] pt-px">
          <div className="-ml-[3px] h-[21px] w-[160px] border border-[#c3c3dc] bg-white pl-[3px] pt-[2px]"><T w={69} className="text-[12px] leading-4 text-[#9b9b9f]">Quick Launch</T></div>
          <Svg w={12} h={8} className="mt-1.5"><path d="M1 7l5-5 5 5" stroke="#c7960c" strokeWidth="1.800" /></Svg>
          <Svg w={15} h={15} className="ml-[3px] mt-[3px]"><path d="M2 3l10-2 2 10-10 3z" stroke="#555" fill="#f3f3f5" strokeWidth="1.200" /><path d="M4 7l3.500 3.500L11 3" stroke="#c7960c" strokeWidth="1.800" /></Svg>
          <span className="ml-[4px] mt-[3px] flex h-[14px] w-[14px] items-center justify-center rounded-full bg-[#4a98ea] text-[11px] font-bold leading-none text-white">?</span>
          <Caret className="-ml-[4px] mt-[8px]" c="#222" />
        </div>
      </div>
      <Ribbon />
      {/* body */}
      <div className="flex h-[609px] shrink-0">
        <div className="flex w-[447px] flex-col">
          <PanelHead title="Outline" w={41} dots="w-[325px]" />
          <div className="flex h-[29px] items-start bg-[#eeeef1] pl-[10px] pt-[2px]">
            <Dots className="mt-[3px] h-[20px] w-[6px]" />
            <div className="ml-[6px] flex h-[25px] w-[100px] items-center justify-between border border-[#c6c6dc] bg-white pl-[3px] pr-[4px] text-[#262626]"><T w={35} className="mt-px text-[13px] leading-[22px]">Name</T><Caret s={8} /></div>
            <div className="h-[25px] w-[90px] border border-[#c6c6dc] bg-white pl-[3px]"><T w={84} className="text-[13px] leading-[24px] text-[#a3a3a8]">Search Outline</T></div>
            <Svg w={12} h={8} className="ml-[5px] mt-[8px]"><path d="M1 1l5 5 5-5" stroke="#c7960c" strokeWidth="1.800" /></Svg>
            <Svg w={8} h={5} className="ml-[6px] mt-[16px]"><path d="M0 0h8L4 4z" fill="#111" /></Svg>
          </div>
          <div className="flex h-[264px]">
            <div className="w-[427px] bg-white">{tree.map((r, i) => <TreeRow key={i} row={r} i={i} />)}</div>
            <div className="ml-[7px] mt-[43px] h-[204px] w-0.5 bg-[#828285]" />
          </div>
          <div className="h-[4px]" />
          <PanelHead title={'Details of "Equivalent Stress"'} w={167} dots="w-[198px]" />
          <div className="flex h-[268px] overflow-hidden">
            <div className="w-[427px] bg-white">{details.map((d, i) => <DetailRow key={i} d={d} />)}</div>
            <div className="ml-[7px] mt-[17px] h-[125px] w-0.5 bg-[#828285]" />
          </div>
        </div>
        <div className="flex w-[918px] flex-col">
          <div className="flex h-[27px] items-center bg-[#eeeef1] pl-[9px]">
            <Dots className="h-[18px] w-[8px]" />
            <TB w="w-[30px] pl-[3px]"><Mag><path d="M4 7l3-2.500V6h3v2H7v1.500z" fill="#c7960c" /></Mag></TB>
            <TB w="w-[19px] pr-[4px]"><Mag c="#aaa"><path d="M10 7L7 4.500V6H4v2h3v1.500z" fill="#bbb" /></Mag></TB>
            <span className="w-[2px]" /><TSep />
            <span className="ml-[3px] flex h-[22px] w-[22px] items-center justify-center border border-[#3394f0] bg-[#e8eefa]"><Cube s={15} top="#888" l="#555" r="#777" st="#222" /></span>
            <TB w="w-[22px]"><Cube s={15} top="#d8d8d8" l="#777" r="#aaa" st="none" /></TB>
            <TB w="w-[22px]"><ViewCubes /></TB><span className="w-[3px]" /><TSep />
            <TB w="w-[26px]"><Boxes /></TB><TSep />
            <span className="ml-[3px] flex h-[22px] w-[33px] items-center justify-between border border-[#3394f0] px-[2px]"><Rotate /><Caret /></span>
            <TB w="w-[22px]"><Pan /></TB>
            <TB w="w-[22px]"><Mag><path d="M7 3l2.500 3h-5zM7 11l2.500-3h-5z" fill="#c7960c" /></Mag></TB>
            <TB w="w-[22px]"><Mag><path d="M4 7h6M7 4v6" stroke="#c7960c" strokeWidth="1.800" /></Mag></TB>
            <TB w="w-[22px]"><Mag><path d="M4 5.500L7 4l3 1.500v3L7 10 4 8.500z" fill="#8ab8ec" stroke="#555" /></Mag></TB>
            <TB w="w-[21px]"><Mag><path d="M4 5.500L7 4l3 1.500v3L7 10 4 8.500z" fill="#3cc84a" stroke="#555" /></Mag></TB>
            <span className="w-[3px]" /><TSep />
            <T w={34} className="ml-[7px] mt-px text-[13px] text-[#262626]">Select</T>
            <span className="ml-[8px] w-[17px]"><Pointer /></span>
            <T w={35} className="mt-px text-[13px] text-[#262626]">Mode</T><Caret className="ml-0.5 mr-[8px]" />
            <TB w="w-[22px]"><Grid4 /></TB>
            {[0, 1, 2, 3].map((v) => <TB key={v} w="w-[22px]"><Pick v={v} /></TB>)}
            {[0, 1, 2].map((v) => <TB key={v} w="w-[22px]"><MeshPick v={v} /></TB>)}
            <TB w="w-[22px]"><XYZ /></TB><TB w="w-[22px]"><Tag100 /></TB><TB w="w-[22px]"><AbcTag /></TB>
            <span className="w-[2px]" /><TSep />
            <Svg w={14} h={14} className="ml-[7px]"><rect x=".6" y=".6" width="12.800" height="12.800" fill="#e8bc3c" stroke="#333" strokeWidth="1.200" /><path d="M4 3l3-1.500L10 3z" fill="#333" /></Svg>
            <T w={59} className="ml-[3px] mt-px text-[13px] text-[#262626]">Clipboard</T><Caret className="ml-px" />
            <T w={52} className="ml-[12px] mt-px text-[13px] text-[#262626]">[ Empty ]</T>
            <Svg w={8} h={18} className="ml-auto mr-[3px]"><path d="M1 1l3 2.500L7 1M1 4.500L4 7l3-2.500" stroke="#444" /><path d="M1 13h6l-3 3.500z" fill="#111" /></Svg>
          </div>
          <div className="relative h-[582px] bg-linear-to-b from-[#6a8bdd] to-white">
            <Model />
            <div className="absolute left-[15px] top-[14px] flex flex-col text-[11.5px] leading-[15px] text-black">
              <T w={105} className="self-start font-bold">A: Static Structural</T>
              <T w={88} className="self-start">Equivalent Stress</T>
              <T w={186} className="self-start">Type: Equivalent (von-Mises) Stress</T>
              <T w={41} className="self-start">Unit: Pa</T>
              <T w={53} className="self-start">Time: 10 s</T>
            </div>
            <div className="absolute left-[15px] top-[103px] flex text-[12px] text-black">
              <div className="mt-[7px] h-[153px] w-4 border-x border-b-2 border-t-2 border-black bg-black">
                {legend.map(([c], i) => <div key={i} className={'h-[16.600px] border-t border-black ' + c} />)}
              </div>
              <div className="ml-[8px] flex flex-col leading-[16.700px]">
                <T w={61} className="self-start font-bold">71592 Max</T>
                {legend.slice(0, 8).map(([, v]) => <T key={v} w={v.length > 5 ? 33 : 30} className="self-start text-[11.5px]">{v}</T>)}
                <T w={75} className="self-start font-bold">0.022039 Min</T>
              </div>
            </div>
          </div>
        </div>
      </div>
      {/* status bar */}
      <div className="flex h-[21px] shrink-0 items-center bg-[#007acc] pl-[839px] pt-[4px] text-[12px] text-white">
        <Svg w={17} h={16} className="-mt-1"><path d="M1 4h13v8H7l-3 3v-3H1z" fill="#f2d98a" stroke="#a98a3c" /><circle cx="9" cy="6" r="5" fill="#1230d8" stroke="#dde" /><path d="M9 3v1.200M9 5.500V9" stroke="#fff" strokeWidth="1.500" /></Svg>
        <T w={64} className="ml-[1px]">1 Message</T>
        <T w={75} className="ml-[18px]">No Selection</T>
        <Svg w={8} h={5} className="mb-1 ml-[20px] mr-[7px]"><path d="M0 5h8L4 0z" fill="#fff" /></Svg>
        <T w={141}>Metric (m, kg, N, s, V, A)</T>
        <T w={49} className="ml-[16px]">Degrees</T>
        <T w={31} className="ml-[16px]">rad/s</T>
        <T w={40} className="ml-[16px]">Celsius</T>
      </div>
    </div>
  );
}
